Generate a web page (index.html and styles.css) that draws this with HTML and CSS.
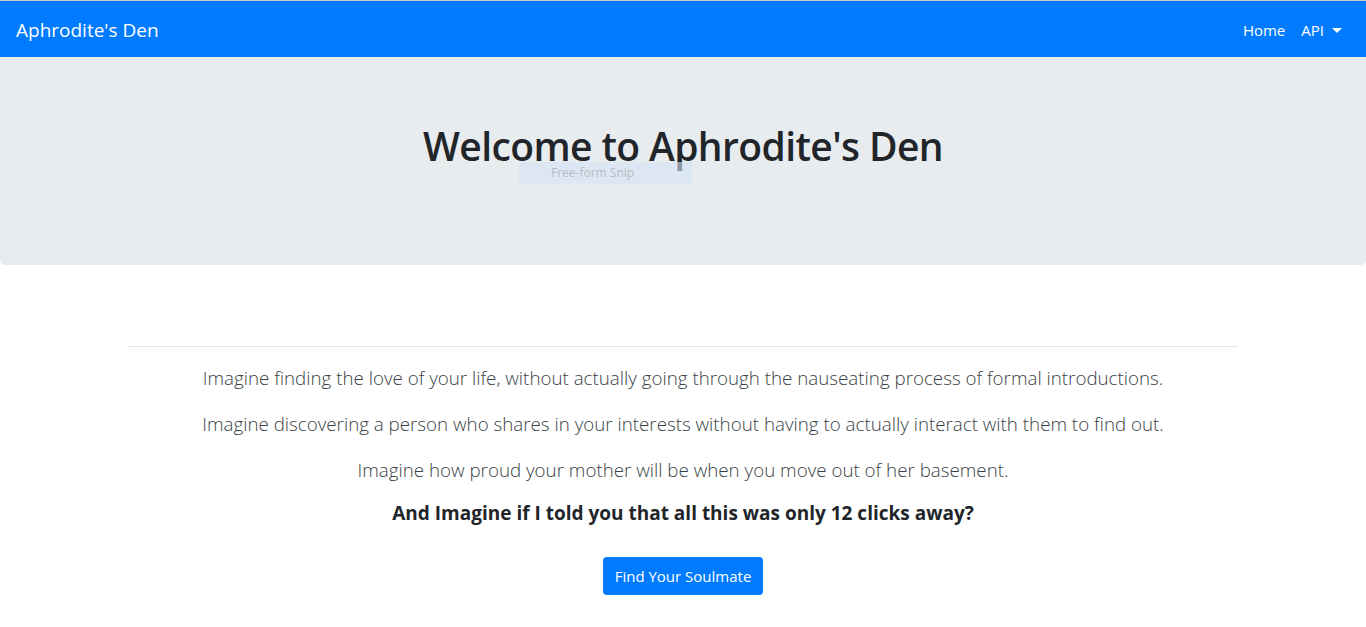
FILE: index.html
```html
<!DOCTYPE html>
<html lang="en">
<head>
<meta charset="utf-8">
<title>Aphrodite's Den</title>
<link rel="stylesheet" href="styles.css">
</head>
<body>
<nav class="navbar">
  <a class="brand" href="#">Aphrodite's Den</a>
  <ul class="nav">
    <li><a class="nav-link" href="#">Home</a></li>
    <li><a class="nav-link dropdown" href="#">API<span class="caret"></span></a></li>
  </ul>
</nav>
<header class="jumbotron">
  <h1 class="title">Welcome to Aphrodite's Den</h1>
  <div class="snip">Free-form Snip</div>
</header>
<main class="container">
  <hr class="rule">
  <p class="lead">Imagine finding the love of your life, without actually going through the nauseating process of formal introductions.</p>
  <p class="lead">Imagine discovering a person who shares in your interests without having to actually interact with them to find out.</p>
  <p class="lead">Imagine how proud your mother will be when you move out of her basement.</p>
  <h5 class="punch">And Imagine if I told you that all this was only 12 clicks away?</h5>
  <a class="btn" href="#">Find Your Soulmate</a>
</main>
</body>
</html>
```
FILE: styles.css
```css
* { box-sizing: border-box; }
html, body { margin: 0; padding: 0; }
body {
  font-family: "Open Sans", "Noto Sans", sans-serif;
  font-size: 16px;
  color: #212529;
  background: #fff;
  border-top: 1px solid #c9c9c9;
}
.navbar {
  background: #007bff;
  height: 56px;
  display: flex;
  align-items: center;
  justify-content: space-between;
  padding: 2px 16px 0;
}
.brand {
  color: #fff;
  font-size: 19px;
  text-decoration: none;
}
.nav {
  list-style: none;
  display: flex;
  margin: 0;
  padding: 0;
}
.nav-link {
  color: #fff;
  text-decoration: none;
  padding: 8px;
  display: flex;
  align-items: center;
  font-size: 15px;
}
.caret {
  display: inline-block;
  margin-left: 8px;
  border-top: 5px solid #fff;
  border-left: 5px solid transparent;
  border-right: 5px solid transparent;
}
.jumbotron {
  position: relative;
  background: #e9ecef;
  height: 208px;
  border-radius: 0 0 5px 5px;
  padding-top: 65px;
  text-align: center;
}
.title {
  margin: 0;
  font-size: 39px;
  font-weight: 600;
  letter-spacing: -0.6px;
  line-height: 48px;
}
.snip {
  position: absolute;
  left: 519px;
  top: 105px;
  width: 173px;
  height: 22px;
  background: rgba(214, 228, 245, 0.6);
  color: #b8bcc2;
  font-size: 12px;
  line-height: 22px;
  text-align: left;
  padding-left: 32px;
}
.container {
  width: 1110px;
  margin: 0 auto;
  padding-top: 81px;
  text-align: center;
}
.rule {
  margin: 0 0 16px;
  border: 0;
  border-top: 1px solid rgba(0,0,0,0.1);
}
.lead {
  margin: 0 0 16px;
  font-size: 18.75px;
  font-weight: 300;
  line-height: 30px;
  color: #3a3f44;
}
.punch {
  margin: 0 0 32px;
  font-size: 19px;
  font-weight: 700;
  line-height: 24px;
}
.btn {
  display: inline-block;
  background: #007bff;
  color: #fff;
  text-decoration: none;
  font-size: 15px;
  line-height: 24px;
  padding: 7px 12px;
  border-radius: 4px;
  white-space: nowrap;
}
```
